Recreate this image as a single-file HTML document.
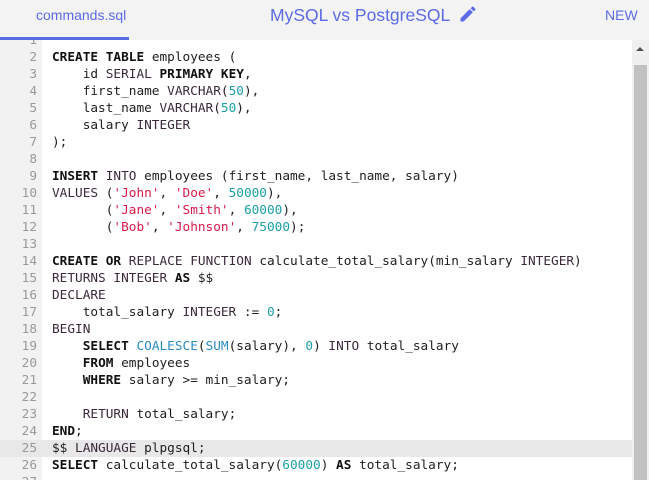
<!DOCTYPE html>
<html><head><style>
*{margin:0;padding:0;box-sizing:border-box}
body{width:649px;height:480px;overflow:hidden;background:#fff;font-family:"Liberation Sans",sans-serif;position:relative}
#hdr{position:absolute;left:0;top:0;width:649px;height:40px;background:#f3f3f3}
#tab{position:absolute;left:0;top:0;width:129px;height:40px;border-bottom:3px solid #5b6be6}
#tabt{position:absolute;left:36px;top:7px;font-size:14px;color:#5b6be6}
#title{position:absolute;left:270px;top:4px;font-size:17.5px;color:#5b6be6;white-space:nowrap}
#new{position:absolute;left:605px;top:7px;font-size:14px;color:#5b6be6}
#ed{position:absolute;left:0;top:40px;width:632px;height:440px;overflow:hidden;background:#fff}
#gut{position:absolute;left:0;top:0;width:42px;height:440px;background:#f2f2f2}
#code{position:absolute;left:0;top:-8.5px;width:632px;font-family:"DejaVu Sans Mono",monospace;font-size:12.75px;line-height:17px;color:#1e1e1e}
.l{position:relative;height:17px;white-space:pre}
.n{position:absolute;left:0;width:37px;text-align:right;color:#999}
.t{position:absolute;left:52px}
.hl{background:#e8e8e8}
b{font-weight:bold;color:#111}
.s{color:#d81b4a}.d{color:#1b9fa8}.k{color:#3a2a3a}.f{color:#2a8ac0}
#sb{position:absolute;left:632px;top:40px;width:17px;height:440px;background:#f0f0f0}
#th{position:absolute;left:2px;top:25px;width:13px;height:415px;background:#c1c1c1}
#ar{position:absolute;left:4px;top:7px;width:0;height:0;border-left:4px solid transparent;border-right:4px solid transparent;border-bottom:4px solid #505050}
</style></head><body>
<div id="hdr">
<div id="tab"><span id="tabt">commands.sql</span></div>
<div id="title">MySQL vs PostgreSQL <svg width="20" height="20" viewBox="0 0 24 24" style="vertical-align:-3px;margin-left:4px"><path fill="#5b6be6" d="M3 17.25V21h3.75L17.81 9.94l-3.75-3.75L3 17.25zM20.71 7.04a1 1 0 0 0 0-1.41l-2.34-2.34a1 1 0 0 0-1.41 0l-1.83 1.83 3.75 3.75 1.83-1.83z"/></svg></div>
<div id="new">NEW</div>
</div>
<div id="ed"><div id="gut"></div>
<div id="code">
<div class="l"><span class="n">1</span><span class="t"></span></div>
<div class="l"><span class="n">2</span><span class="t"><b>CREATE</b> <b>TABLE</b> employees (</span></div>
<div class="l"><span class="n">3</span><span class="t">    id <span class="k">SERIAL</span> <b>PRIMARY</b> <b>KEY</b>,</span></div>
<div class="l"><span class="n">4</span><span class="t">    first_name <span class="k">VARCHAR</span>(<span class="d">50</span>),</span></div>
<div class="l"><span class="n">5</span><span class="t">    last_name <span class="k">VARCHAR</span>(<span class="d">50</span>),</span></div>
<div class="l"><span class="n">6</span><span class="t">    salary <span class="k">INTEGER</span></span></div>
<div class="l"><span class="n">7</span><span class="t">);</span></div>
<div class="l"><span class="n">8</span><span class="t"></span></div>
<div class="l"><span class="n">9</span><span class="t"><b>INSERT</b> <span class="k">INTO</span> employees (first_name, last_name, salary)</span></div>
<div class="l"><span class="n">10</span><span class="t"><span class="k">VALUES</span> (<span class="s">'John'</span>, <span class="s">'Doe'</span>, <span class="d">50000</span>),</span></div>
<div class="l"><span class="n">11</span><span class="t">       (<span class="s">'Jane'</span>, <span class="s">'Smith'</span>, <span class="d">60000</span>),</span></div>
<div class="l"><span class="n">12</span><span class="t">       (<span class="s">'Bob'</span>, <span class="s">'Johnson'</span>, <span class="d">75000</span>);</span></div>
<div class="l"><span class="n">13</span><span class="t"></span></div>
<div class="l"><span class="n">14</span><span class="t"><b>CREATE</b> <b>OR</b> <span class="k">REPLACE</span> <span class="k">FUNCTION</span> calculate_total_salary(min_salary <span class="k">INTEGER</span>)</span></div>
<div class="l"><span class="n">15</span><span class="t"><span class="k">RETURNS</span> <span class="k">INTEGER</span> <b>AS</b> $$</span></div>
<div class="l"><span class="n">16</span><span class="t"><span class="k">DECLARE</span></span></div>
<div class="l"><span class="n">17</span><span class="t">    total_salary <span class="k">INTEGER</span> := <span class="d">0</span>;</span></div>
<div class="l"><span class="n">18</span><span class="t"><span class="k">BEGIN</span></span></div>
<div class="l"><span class="n">19</span><span class="t">    <b>SELECT</b> <span class="f">COALESCE</span>(<span class="f">SUM</span>(salary), <span class="d">0</span>) <span class="k">INTO</span> total_salary</span></div>
<div class="l"><span class="n">20</span><span class="t">    <b>FROM</b> employees</span></div>
<div class="l"><span class="n">21</span><span class="t">    <b>WHERE</b> salary &gt;= min_salary;</span></div>
<div class="l"><span class="n">22</span><span class="t"></span></div>
<div class="l"><span class="n">23</span><span class="t">    <span class="k">RETURN</span> total_salary;</span></div>
<div class="l"><span class="n">24</span><span class="t"><b>END</b>;</span></div>
<div class="l hl"><span class="n">25</span><span class="t">$$ <span class="k">LANGUAGE</span> plpgsql;</span></div>
<div class="l"><span class="n">26</span><span class="t"><b>SELECT</b> calculate_total_salary(<span class="d">60000</span>) <b>AS</b> total_salary;</span></div>
<div class="l"><span class="n">27</span><span class="t"></span></div>
</div></div>
<div id="sb"><div id="ar"></div><div id="th"></div></div>
</body></html>
